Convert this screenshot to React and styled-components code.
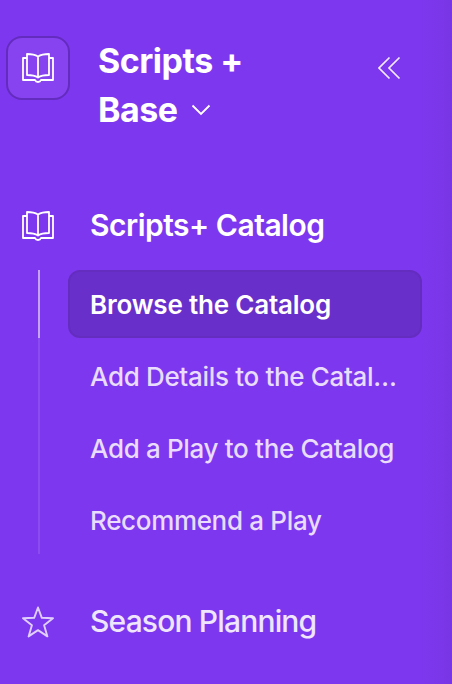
import React from 'react';
import styled, { createGlobalStyle } from 'styled-components';

const GlobalStyle = createGlobalStyle`
  * {
    box-sizing: border-box;
  }

  body {
    margin: 0;
    background: #7d37ee;
  }
`;

const Sidebar = styled.aside`
  width: 452px;
  height: 684px;
  overflow: hidden;
  background: linear-gradient(to right, rgba(80, 40, 150, 0) 420px, rgba(80, 40, 150, 0.04) 438px, rgba(80, 40, 150, 0.12) 452px), #7d37ee;
  color: #fff;
  font-family: Inter, 'Liberation Sans', sans-serif;
`;

const Header = styled.header`
  display: flex;
  align-items: flex-start;
  padding: 36px 51px 0 6px;
  height: 190px;
`;

const BaseBadge = styled.div`
  flex: none;
  display: flex;
  align-items: center;
  justify-content: center;
  width: 64px;
  height: 64px;
  border: 2px solid #642cbe;
  border-radius: 16px;
  background: #8643ef;
`;

const BaseName = styled.h1`
  width: 200px;
  margin: 0 0 0 28px;
  font-size: 34px;
  font-weight: 700;
  line-height: 49px;
  letter-spacing: -0.5px;
`;

const BaseChevron = styled.svg`
  margin-left: 13px;
  vertical-align: 6px;
`;

const CollapseButton = styled.button`
  margin: 20px 0 0 auto;
  padding: 0;
  border: 0;
  background: none;
  color: #f2ebfe;
  line-height: 0;
`;

const SectionHeader = styled.div`
  display: flex;
  align-items: center;
  gap: 36px;
  height: 72px;
  padding-left: 22px;
  color: ${props => (props.$open ? '#fff' : '#efe6fd')};
  font-size: 30px;
  font-weight: ${props => (props.$open ? 600 : 450)};
  letter-spacing: ${props => (props.$open ? '-0.5px' : '-0.83px')};
`;

const SectionTitle = styled.span`
  padding-bottom: 2px;
`;

const PageList = styled.ul`
  display: flex;
  flex-direction: column;
  margin: 8px 30px 32px 38px;
  padding: 0;
  list-style: none;
`;

const PageItem = styled.li`
  display: flex;
  height: ${props => (props.$last ? '68px' : '72px')};
  padding-left: 28px;
  border-left: 2px solid #8c4bf0;

  ${props => props.$active && `
    height: 68px;
    border-left-color: #c5a3f8;

    & + li {
      height: 76px;
      padding-top: 4px;
    }
  `}
`;

const PageLink = styled.a`
  flex: 1;
  min-width: 0;
  height: 68px;
  padding: 1px 20px 0;
  border: 2px solid ${props => (props.$active ? '#642dc0' : 'transparent')};
  border-radius: 12px;
  background: ${props => (props.$active ? '#692fcb' : 'transparent')};
  color: ${props => (props.$active ? '#fff' : '#e9dcfd')};
  font-size: 26px;
  font-weight: ${props => (props.$active ? 600 : 450)};
  line-height: 64px;
  letter-spacing: ${props => (props.$active ? '-0.2px' : '-0.33px')};
  white-space: nowrap;
  overflow: hidden;
  text-overflow: ellipsis;
`;

const BookIcon = () => (
  <svg width="32" height="30" viewBox="0 0 32 30" fill="none" stroke="currentColor" strokeWidth="1.8" strokeLinejoin="round">
    <path d="M5 5H1v22h12c.5 1.400 1.500 2 3 2s2.500-.6 3-2h12V5h-4" />
    <path d="M16 3.500C13 1.600 9 1 5 1v21c4 0 8 .5 11 2.500 3-2 7-2.500 11-2.500V1c-4 0-8 .6-11 2.500v21" />
  </svg>
);

const StarIcon = () => (
  <svg width="32" height="32" viewBox="0 0 32 32" fill="none" stroke="#e0cffc" strokeWidth="1.9" strokeLinejoin="round">
    <path d="M16 1.500l3.800 10.300 11.200.4-8.900 7 3.300 11.200L16 24.100 6.600 30.400 9.900 19.200 1 12.200l11.200-.4z" />
  </svg>
);

const pages = [
  { name: 'Browse the Catalog', active: true },
  { name: 'Add Details to the Catalog' },
  { name: 'Add a Play to the Catalog' },
  { name: 'Recommend a Play' },
];

const App = () => {
  return (
    <>
      <GlobalStyle />
      <Sidebar>
        <Header>
          <BaseBadge>
            <BookIcon />
          </BaseBadge>
          <BaseName>
            Scripts +<br />
            Base
            <BaseChevron width="20" height="12" viewBox="0 0 20 12" fill="none" stroke="currentColor" strokeWidth="1.8">
              <path d="M1.500 1.500l8.500 8.500 8.500-8.500" />
            </BaseChevron>
          </BaseName>
          <CollapseButton aria-label="Collapse sidebar">
            <svg width="23" height="24" viewBox="0 0 23 24" fill="none" stroke="currentColor" strokeWidth="1.7">
              <path d="M11.500 1.500L1 12l10.500 10.500M21.500 1.500L11 12l10.500 10.500" />
            </svg>
          </CollapseButton>
        </Header>
        <nav>
          <SectionHeader $open>
            <BookIcon />
            <SectionTitle>Scripts+ Catalog</SectionTitle>
          </SectionHeader>
          <PageList>
            {pages.map((page, index) => (
              <PageItem key={page.name} $active={page.active} $last={index === pages.length - 1}>
                <PageLink $active={page.active}>{page.name}</PageLink>
              </PageItem>
            ))}
          </PageList>
          <SectionHeader>
            <StarIcon />
            <SectionTitle>Season Planning</SectionTitle>
          </SectionHeader>
        </nav>
      </Sidebar>
    </>
  );
};

export default App;
